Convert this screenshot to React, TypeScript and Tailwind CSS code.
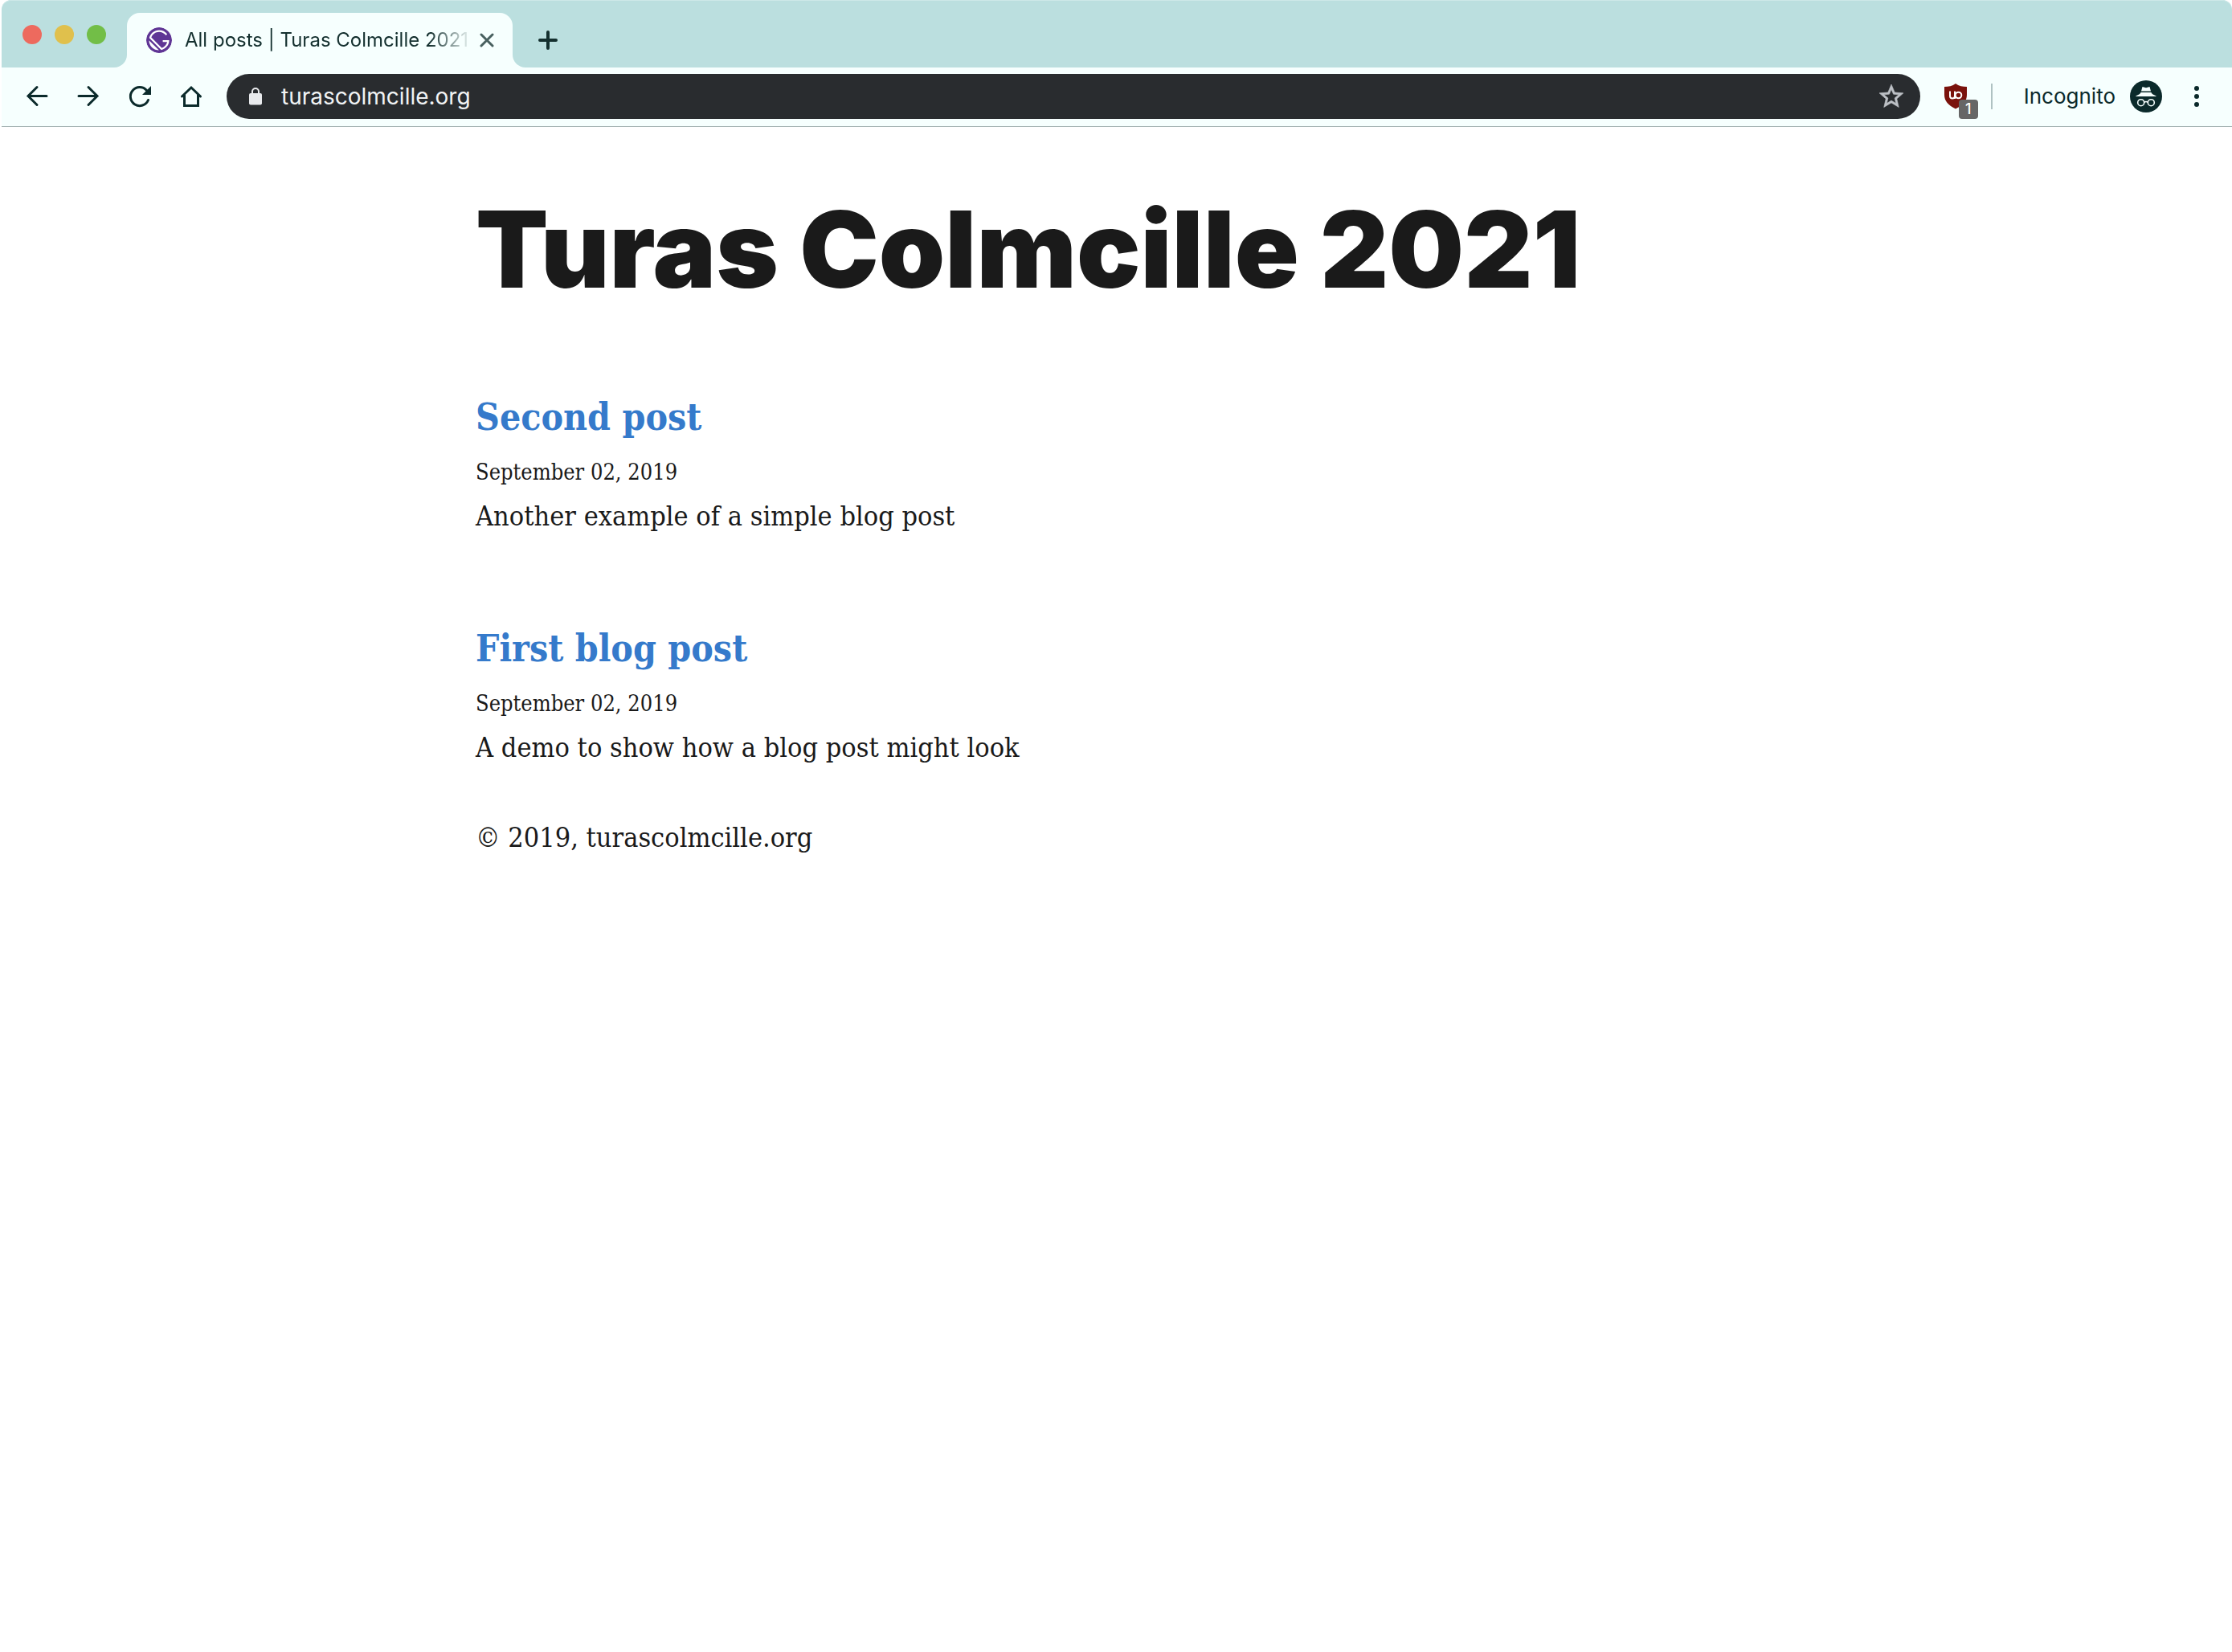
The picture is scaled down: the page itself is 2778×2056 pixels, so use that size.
import React from "react";

const GatsbyIcon = () => (
  <svg viewBox="0 0 24 24" className="size-8 shrink-0 rounded-full bg-white" aria-hidden="true">
    <path
      fill="#5f3595"
      d="M12 0C5.4 0 0 5.4 0 12s5.4 12 12 12 12-5.4 12-12S18.6 0 12 0zm0 2.571c3.171 0 5.915 1.46 7.629 3.858l-1.286 1.115C16.886 5.572 14.571 4.286 12 4.286c-3.343 0-6.171 2.143-7.286 5.143l9.857 9.857c2.486-.857 4.373-3 4.973-5.572h-4.115V12h6c0 4.457-3.172 8.228-7.372 9.17L2.83 9.944C3.772 5.743 7.543 2.571 12 2.571zm-9.429 9.6l9.344 9.258c-2.4-.086-4.801-.943-6.601-2.743-1.8-1.8-2.743-4.201-2.743-6.515z"
    />
  </svg>
);

const stroke = { fill: "none", stroke: "currentColor", strokeWidth: 3, strokeLinecap: "round" as const };

const BackIcon = () => (
  <svg viewBox="0 0 32 32" className="size-8" {...stroke}>
    <path d="M28 15.5H5M16 4.5L5 15.5l11 11" />
  </svg>
);
const ForwardIcon = () => (
  <svg viewBox="0 0 32 32" className="size-8" {...stroke}>
    <path d="M4 15.5h23M16 4.5l11 11-11 11" />
  </svg>
);
const ReloadIcon = () => (
  <svg viewBox="0 0 32 32" className="size-8" {...stroke}>
    <path d="M26.5 20.5A11.5 11.5 0 1 1 24.5 8.5" />
    <path d="M30 3v11H19z" fill="currentColor" stroke="none" />
  </svg>
);
const HomeIcon = () => (
  <svg viewBox="0 0 32 32" className="size-8" {...stroke}>
    <path d="M4.5 16L16 5l11.500 11M7.500 14v13.500h17V14" />
  </svg>
);
const LockIcon = () => (
  <svg viewBox="0 0 16 22" className="h-[22px] w-4 shrink-0" aria-hidden="true">
    <rect x="0" y="7" width="16" height="14.5" rx="2" fill="#e8eaed" />
    <path d="M4 8V5a4 4 0 0 1 8 0v3" fill="none" stroke="#e8eaed" strokeWidth="2" />
  </svg>
);
const StarIcon = () => (
  <svg viewBox="0 0 24 24" className="size-9" aria-hidden="true">
    <path
      fill="#bdc1c6"
      stroke="#bdc1c6"
      strokeWidth="0.4"
      d="M22 9.240l-7.190-.62L12 2 9.190 8.630 2 9.240l5.460 4.730L5.820 21 12 17.270 18.180 21l-1.630-7.030L22 9.240zM12 15.400l-3.760 2.270 1-4.280-3.320-2.880 4.380-.38L12 6.100l1.710 4.040 4.380.38-3.320 2.880 1 4.280L12 15.400z"
    />
  </svg>
);
const ShieldIcon = () => (
  <svg viewBox="0 0 28 32" className="h-8 w-7" aria-hidden="true">
    <path d="M14 0c-4 3-9 4-14 4v10c0 8 5 13 14 17.500C23 27 28 22 28 14V4c-5 0-10-1-14-4z" fill="#7a120c" />
    <g fill="none" stroke="#fff" strokeWidth="2">
      <path d="M7 9.500v6a3 3 0 0 0 6 0v-6" />
      <path d="M13 14v5" />
      <circle cx="17.500" cy="14.500" r="3.800" />
    </g>
  </svg>
);
const IncognitoIcon = () => (
  <svg viewBox="0 0 40 40" className="size-10" aria-hidden="true">
    <circle cx="20" cy="20" r="20" fill="#0b2a2b" />
    <path d="M15.500 8l4.500 1.200L24.500 8 26 13.500H14zM7 20c2-2 6-2.500 6.500-5h13c.5 2.500 4.500 3 6.500 5z" fill="#f6fffe" />
    <g fill="none" stroke="#f6fffe" strokeWidth="1.6">
      <circle cx="13.700" cy="27.700" r="4" />
      <circle cx="26.300" cy="27.700" r="4" />
      <path d="M17.700 27.200q2.300-1.400 4.600 0" />
    </g>
  </svg>
);

const nav = [
  { label: "Back", Icon: BackIcon },
  { label: "Forward", Icon: ForwardIcon },
  { label: "Reload", Icon: ReloadIcon },
  { label: "Home", Icon: HomeIcon },
];

const posts = [
  { title: "Second post", date: "September 02, 2019", text: "Another example of a simple blog post" },
  { title: "First blog post", date: "September 02, 2019", text: "A demo to show how a blog post might look" },
];

function TabStrip() {
  return (
    <div className="flex h-[84px]">
      <div className="flex w-[156px] gap-4 rounded-tl-xl rounded-br-2xl bg-[#bbdfdf] pt-[31px] pl-[26px] shadow-[inset_0_1px_0_#cde8e8]">
        <button aria-label="Close window" className="size-6 rounded-full bg-[#ed6a5e]" />
        <button aria-label="Minimize window" className="size-6 rounded-full bg-[#e0c04c]" />
        <button aria-label="Zoom window" className="size-6 rounded-full bg-[#72be47]" />
      </div>
      <div className="w-[480px] bg-[#bbdfdf] pt-4 shadow-[inset_0_1px_0_#cde8e8]">
        <div className="flex h-full items-start rounded-t-2xl bg-[#f6fffe] pt-4 pr-[14px] pl-6">
          <div className="flex h-9 min-w-0 flex-1 items-center">
            <GatsbyIcon />
            <span className="ml-4 flex-1 overflow-hidden text-2xl leading-9 whitespace-nowrap text-[#14302f] [mask-image:linear-gradient(to_right,black_85%,transparent)]">
              All posts | Turas Colmcille 2021
            </span>
          </div>
          <button aria-label="Close tab" className="flex size-9 items-center justify-center text-[#48605f]">
            <svg viewBox="0 0 18 18" className="size-[18px]" {...stroke}>
              <path d="M2 2l14 14M16 2L2 16" />
            </svg>
          </button>
        </div>
      </div>
      <div className="flex flex-1 rounded-tr-xl rounded-bl-2xl bg-[#bbdfdf] pt-8 pl-[26px] shadow-[inset_0_1px_0_#cde8e8]">
        <button aria-label="New tab" className="flex size-9 items-center justify-center text-[#14302f]">
          <svg viewBox="0 0 24 24" className="size-6" {...stroke} strokeWidth={4}>
            <path d="M12 2v20M2 12h20" />
          </svg>
        </button>
      </div>
    </div>
  );
}

function Toolbar() {
  return (
    <div className="flex h-[74px] items-center border-b border-[#a3b1b1] pr-6 pb-px pl-7 text-[#0b2a2b]">
      <div className="flex gap-8">
        {nav.map(({ label, Icon }) => (
          <button key={label} aria-label={label}>
            <Icon />
          </button>
        ))}
      </div>
      <form className="ml-7 flex h-14 flex-1 items-center rounded-full bg-[#292c2f] pr-[18px] pl-7">
        <LockIcon />
        <input
          aria-label="Address"
          type="text"
          defaultValue="turascolmcille.org"
          className="ml-6 min-w-0 flex-1 bg-transparent text-[28px] leading-9 text-[#f1f3f4] outline-none"
        />
        <button type="button" aria-label="Bookmark this page">
          <StarIcon />
        </button>
      </form>
      <button aria-label="Content blocker, 1 request blocked" className="relative ml-[30px]">
        <ShieldIcon />
        <span className="absolute top-5 left-[18px] flex size-6 items-center justify-center rounded bg-[#666] text-lg leading-6 font-medium text-white">
          1
        </span>
      </button>
      <div className="ml-[30px] h-8 w-0.5 bg-[#afc2c2]" />
      <button className="ml-[39px] flex items-center gap-[18px] text-[26px] leading-9">
        Incognito
        <IncognitoIcon />
      </button>
      <button aria-label="Menu" className="ml-[23px] flex w-10 justify-center">
        <svg viewBox="0 0 6 26" className="h-[26px] w-1.5" fill="currentColor">
          <circle cx="3" cy="3" r="3" />
          <circle cx="3" cy="13" r="3" />
          <circle cx="3" cy="23" r="3" />
        </svg>
      </button>
    </div>
  );
}

export default function App() {
  return (
    <div className="min-h-screen bg-white pl-0.5 font-['Inter',sans-serif]">
      <header className="rounded-t-xl bg-[#f6fffe]">
        <TabStrip />
        <Toolbar />
      </header>
      <div className="mx-auto max-w-[1596px] font-['DejaVu_Serif_Condensed','DejaVu_Serif',serif] text-[#1a1a1a]">
        <h1 className="pt-20 pb-[109px] font-['Inter',sans-serif] text-[132px] leading-[144px] font-black">
          <a href="#">Turas Colmcille 2021</a>
        </h1>
        <main className="flex flex-col gap-[110px]">
          {posts.map((post) => (
            <article key={post.title}>
              <h2 className="mb-3.5 text-[46px] leading-[56px] font-bold text-[#357acb]">
                <a href="#">{post.title}</a>
              </h2>
              <p className="text-[27px] leading-[54px]">{post.date}</p>
              <p className="text-[34px] leading-[54px]">{post.text}</p>
            </article>
          ))}
        </main>
        <footer className="mt-[58px] text-[34px] leading-[54px]">© 2019, turascolmcille.org</footer>
      </div>
    </div>
  );
}
